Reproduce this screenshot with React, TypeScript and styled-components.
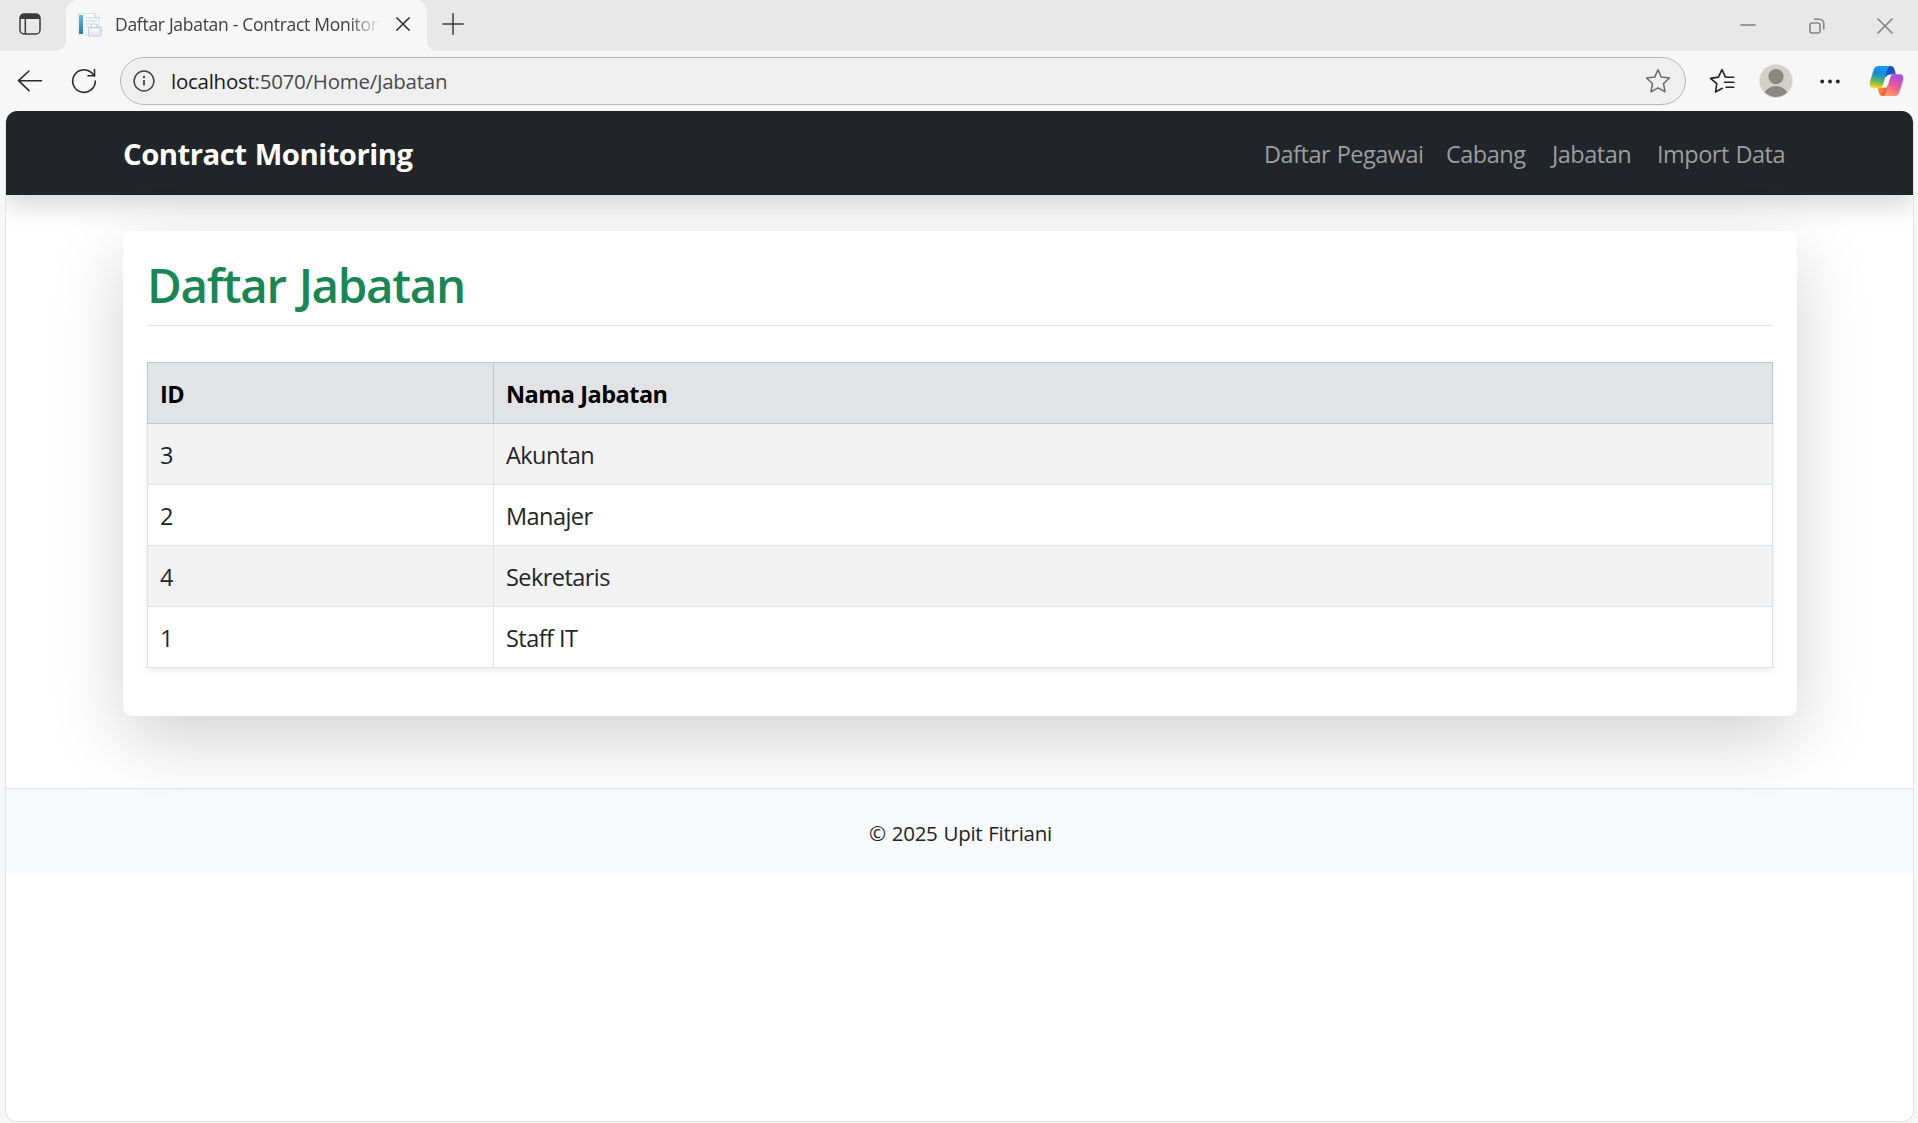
import React from 'react';
import styled, { createGlobalStyle } from 'styled-components';

const GlobalStyle = createGlobalStyle`
  *, *::before, *::after { box-sizing: border-box; }
  body {
    margin: 0;
    background: #f7f7f7;
    color: #212529;
    font-family: 'Segoe UI', 'Open Sans', 'Noto Sans', sans-serif;
    font-size: 23.5px;
    line-height: 36px;
    overflow: hidden;
  }
`;

const Window = styled.div`
  display: flex;
  flex-direction: column;
  width: 1918px;
  height: 1123px;
  background: #f7f7f7;
`;

const TabStrip = styled.div`
  display: flex;
  flex: none;
  height: 51px;
  background: #e8e8e8;
`;

const StripCell = styled.div<{ $w: number; $round?: string; $lift?: number }>`
  display: flex;
  align-items: center;
  justify-content: center;
  width: ${p => p.$w}px;
  height: 51px;
  padding-bottom: ${p => p.$lift ?? 0}px;
  background: #e8e8e8;
  border-radius: ${p => p.$round ?? '0'};
`;

const TabShell = styled.div`
  display: flex;
  flex: 1;
  background: #f7f7f7;
`;

const TabCorners = styled.div`
  width: 361px;
  background: #e8e8e8;
`;

const Tab = styled.div`
  display: flex;
  align-items: center;
  height: 51px;
  padding: 0 17px 3px 11px;
  background: #f7f7f7;
  border-radius: 12px 12px 0 0;
`;

const TabTitle = styled.div`
  flex: 1;
  margin-left: 13px;
  margin-right: 10px;
  padding-bottom: 1px;
  white-space: nowrap;
  font-size: 17.5px;
  letter-spacing: -0.29px;
  line-height: 28px;
  color: #404040;
  mask-image: linear-gradient(to right, #000 86%, transparent 98%);
`;

const StripRest = styled.div`
  display: flex;
  flex: 1;
  justify-content: space-between;
  background: #e8e8e8;
  border-bottom-left-radius: 10px;
`;

const WindowControls = styled.div`
  display: flex;
`;

const Toolbar = styled.div`
  display: flex;
  flex: none;
  align-items: center;
  height: 60px;
  padding: 0 12px 1px 14px;
`;

const ToolIcon = styled.div<{ $w: number; $ml?: number }>`
  display: flex;
  flex: none;
  align-items: center;
  justify-content: center;
  width: ${p => p.$w}px;
  margin-left: ${p => p.$ml ?? 0}px;
`;

const AddressBar = styled.div`
  display: flex;
  align-items: center;
  width: 1566px;
  height: 48px;
  margin-left: 21px;
  padding: 0 14px 0 12px;
  background: #efefef;
  border: 1px solid #b8b8b8;
  border-radius: 24px;
`;

const Address = styled.div`
  flex: 1;
  margin-left: 16px;
  font-size: 20.5px;
  letter-spacing: -0.26px;
  line-height: 30px;
  color: #4a4a4a;
`;

const Host = styled.span`
  color: #1b1b1b;
`;

const Page = styled.div`
  flex: none;
  width: 1909px;
  height: 1011px;
  margin-left: 5px;
  background: #fff;
  border: 1px solid #e2e2e2;
  border-top: 0;
  border-radius: 12px;
  overflow: hidden;
`;

const Navbar = styled.header`
  display: flex;
  align-items: center;
  justify-content: space-between;
  height: 84px;
  padding: 2px 128px 0 117px;
  background: #212529;
  box-shadow: 0 12px 24px rgba(0, 0, 0, 0.15);
`;

const Brand = styled.div`
  font-size: 29.3px;
  font-weight: 700;
  letter-spacing: -0.5px;
  word-spacing: 1px;
  color: #fff;
`;

const Nav = styled.nav`
  display: flex;
  gap: 24px;
`;

const NavLink = styled.a<{ $w: number }>`
  width: ${p => p.$w}px;
  white-space: nowrap;
  letter-spacing: -0.5px;
  word-spacing: 1px;
  color: #9b9d9e;
`;

const Card = styled.main`
  height: 485px;
  margin: 36px 116px 0 117px;
  padding: 24px;
  background: #fff;
  border-radius: 9px;
  box-shadow: 0 24px 72px rgba(0, 0, 0, 0.175);
`;

const Title = styled.h2`
  height: 71px;
  margin: 0 0 36px;
  padding-top: 1px;
  border-bottom: 1px solid #dee2e6;
  font-size: 47.5px;
  font-weight: 600;
  letter-spacing: -1.3px;
  word-spacing: 2px;
  line-height: 58px;
  color: #198754;
`;

const Table = styled.table`
  width: 1626px;
  table-layout: fixed;
  border-collapse: collapse;
  box-shadow: 0 3px 6px rgba(0, 0, 0, 0.075);
`;

const Th = styled.th<{ $w?: number }>`
  width: ${p => (p.$w ? `${p.$w}px` : 'auto')};
  height: 61px;
  padding: 1px 12px 0;
  text-align: left;
  font-weight: 700;
  letter-spacing: -0.5px;
  color: #000;
  background: #e2e3e5;
  border: 1px solid #c6c7c8;
`;

const Td = styled.td`
  height: 61px;
  padding: 1px 12px 0;
  border: 1px solid #dee2e6;
  letter-spacing: -0.55px;
`;

const Row = styled.tr`
  &:nth-child(odd) { background: #f2f2f2; }
`;

const Footer = styled.footer`
  display: flex;
  align-items: center;
  justify-content: center;
  height: 85px;
  margin-top: 72px;
  padding: 4px 0 0 2px;
  background: rgba(240, 244, 248, 0.55);
  border-top: 1px solid #dee2e6;
  font-size: 20.5px;
  letter-spacing: -0.26px;
  word-spacing: 0.8px;
`;

const rows = [
  { id: 3, name: 'Akuntan' },
  { id: 2, name: 'Manajer' },
  { id: 4, name: 'Sekretaris' },
  { id: 1, name: 'Staff IT' },
];

const links = [
  { label: 'Daftar Pegawai', width: 158 },
  { label: 'Cabang', width: 82 },
  { label: 'Jabatan', width: 81 },
  { label: 'Import Data', width: 128 },
];

const TabActionsIcon = () => (
  <svg width="22" height="22" viewBox="0 0 22 22" fill="none">
    <rect x="1" y="1" width="20" height="20" rx="4" stroke="#3b3b3b" strokeWidth="1.5" />
    <path d="M1 6V4.5A3.8 3.8 0 0 1 4.8 1h12.4A3.8 3.8 0 0 1 21 4.5V6Z" fill="#3b3b3b" />
    <path d="M6.3 6v15" stroke="#3b3b3b" strokeWidth="1.5" />
  </svg>
);

const FaviconSvg = styled.svg`
  flex: none;
`;

const Favicon = () => (
  <FaviconSvg width="25" height="25" viewBox="0 0 25 25">
    <defs>
      <linearGradient id="spine" x2="0" y2="1">
        <stop stopColor="#67b7e0" />
        <stop offset="1" stopColor="#2d78b5" />
      </linearGradient>
    </defs>
    <path d="M1 1.5h17l4 4V23H1Z" fill="#fafbfc" stroke="#d5dbe1" strokeWidth=".8" />
    <path d="M18 1v5h5" fill="#e8edf1" stroke="#c4ccd4" strokeWidth=".8" />
    <rect x="2" y="3" width="4" height="19" fill="url(#spine)" />
    <path d="M9 6h8M9 9h11M9 12h4M9 15h3" stroke="#d5dee7" strokeWidth="1.4" />
    <path d="M14 12h6v3h4v6H14Z" fill="#f5f8fc" stroke="#b1c0d1" strokeWidth=".8" />
    <rect x="11.5" y="15.500" width="12.500" height="8.500" rx=".8" fill="#e7eef7" stroke="#b3c3d8" strokeWidth=".8" />
    <path d="M13.500 18.500h8" stroke="#fff" strokeWidth="1.600" />
  </FaviconSvg>
);

const CrossIcon = ({ size, color }: { size: number; color: string }) => (
  <FaviconSvg width={size} height={size} viewBox="0 0 16 16" fill="none">
    <path d="M1 1l14 14M15 1L1 15" stroke={color} strokeWidth="1.7" strokeLinecap="round" />
  </FaviconSvg>
);

const PlusIcon = () => (
  <svg width="22" height="22" viewBox="0 0 22 22">
    <path d="M11 .8v20.400M.8 11h20.400" stroke="#3b3b3b" strokeWidth="1.5" strokeLinecap="round" />
  </svg>
);

const MinimizeIcon = () => (
  <svg width="16" height="16" viewBox="0 0 16 16">
    <path d="M.5 8h15" stroke="#858585" strokeWidth="1.6" />
  </svg>
);

const RestoreIcon = () => (
  <svg width="16" height="16" viewBox="0 0 16 16" fill="none" stroke="#858585" strokeWidth="1.6">
    <rect x="1" y="5" width="10" height="10" rx="2" />
    <path d="M5.500 1.200h4.800A4.500 4.500 0 0 1 14.800 5.700V11" strokeLinecap="round" />
  </svg>
);

const BackIcon = () => (
  <svg width="26" height="24" viewBox="0 0 26 24" fill="none" stroke="#2b2b2b" strokeWidth="1.6" strokeLinecap="round" strokeLinejoin="round">
    <path d="M12 2L1.500 11.700l10.500 10M1.500 11.700h23" />
  </svg>
);

const ReloadIcon = () => (
  <svg width="26" height="26" viewBox="0 0 26 26" fill="none" stroke="#2b2b2b" strokeWidth="1.6" strokeLinecap="round" strokeLinejoin="round">
    <path d="M24.300 13A11.300 11.300 0 1 1 20.500 4.600L23.500 7.700" />
    <path d="M23.500 1.500V7.800H17" />
  </svg>
);

const InfoIcon = () => (
  <FaviconSvg width="22" height="22" viewBox="0 0 22 22" fill="none" stroke="#444" strokeWidth="1.5">
    <circle cx="11" cy="11" r="9.900" />
    <path d="M11 10v5.500" strokeWidth="1.800" />
    <circle cx="11" cy="7" r="1.200" fill="#444" stroke="none" />
  </FaviconSvg>
);

const StarIcon = () => (
  <svg width="26" height="26" viewBox="0 0 26 26" fill="none" stroke="#6b6b6b" strokeWidth="1.500" strokeLinejoin="round">
    <path d="M13 1.800l3.300 7.300 8.200.9-6 5.500 1.500 8.300L13 19.800l-7 4 1.500-8.300-6-5.500 8.200-.9Z" />
  </svg>
);

const FavoritesIcon = () => (
  <svg width="26" height="26" viewBox="0 0 26 26" fill="none" stroke="#262626" strokeWidth="1.600" strokeLinecap="round" strokeLinejoin="round">
    <path d="M12.800 20l-6.500 3.700 1.500-8.100-6.300-5.400 7.900-1.200L13 1.600l3.200 7v5M16.200 8.600l.8 5.400" stroke="none" />
    <path d="M13.300 20.300L6.500 24l1.300-8.300-6.300-5.300 7.900-1.300L13 1.600l3.300 7.200 1 .3M17 9.200h7.800M15.500 14.300h9.300M17 19.300h7.800" />
  </svg>
);

const Avatar = () => (
  <svg width="34" height="34" viewBox="0 0 34 34">
    <defs>
      <clipPath id="avatarClip"><circle cx="17" cy="17" r="16" /></clipPath>
    </defs>
    <circle cx="17" cy="17" r="16.600" fill="#d3d0cc" stroke="#e5e3e1" strokeWidth=".8" />
    <g fill="#8b8783" clipPath="url(#avatarClip)">
      <circle cx="17" cy="12.600" r="7.600" />
      <path d="M4 34c1-7.500 6-12 13-12s12 4.500 13 12Z" />
    </g>
  </svg>
);

const DotsIcon = () => (
  <svg width="20" height="6" viewBox="0 0 20 6" fill="#262626">
    <circle cx="2.200" cy="3.500" r="1.900" /><circle cx="10" cy="3.500" r="1.900" /><circle cx="17.800" cy="3.500" r="1.900" />
  </svg>
);

const CopilotIcon = () => (
  <svg width="35" height="32" viewBox="0 0 35 32">
    <defs>
      <linearGradient id="cpLeft" x1=".55" y1="0" x2=".35" y2="1">
        <stop stopColor="#159ee8" />
        <stop offset=".35" stopColor="#1689dc" />
        <stop offset=".68" stopColor="#55b56b" />
        <stop offset="1" stopColor="#f3cf16" />
      </linearGradient>
      <linearGradient id="cpRight" x1=".7" y1="0" x2=".3" y2="1">
        <stop stopColor="#a34fe8" />
        <stop offset=".45" stopColor="#e6549e" />
        <stop offset="1" stopColor="#ff9f61" />
      </linearGradient>
      <linearGradient id="cpTop" x2="1" y2="1">
        <stop stopColor="#1636a6" />
        <stop offset="1" stopColor="#1f68df" />
      </linearGradient>
      <linearGradient id="cpBottom" x2="1" y2=".4">
        <stop stopColor="#ffb13b" />
        <stop offset="1" stopColor="#e8403c" />
      </linearGradient>
    </defs>
    <path d="M17 1h4.500c2.500 0 3.500 1.500 4.200 4l1.200 4.500H21c-2 0-3 1-3.600 3L13 9Z" fill="url(#cpTop)" />
    <path d="M18 31h-4.200c-2.500 0-3.500-1.500-4.200-4L8.500 22.500H14c2 0 3-1 3.600-3L22 23Z" fill="url(#cpBottom)" />
    <path d="M9.500 1H22c-2.300.3-3 2-3.700 4.300l-4 13.500c-.9 2.700-2 3.900-4.500 3.900H4.500C1 22.700.2 20 1 16.500L4.600 5C5.400 2.300 7 1 9.500 1Z" fill="url(#cpLeft)" />
    <path d="M25.500 31H13.300c2.300-.3 3-2 3.700-4.300l4-13.500c.9-2.700 2-3.900 4.500-3.900h5c3.500 0 4.300 2.700 3.500 6.200L30.400 27c-.8 2.700-2.400 4-4.900 4Z" fill="url(#cpRight)" />
    <path d="M18.600 10.500h3.200c-.6.800-.9 1.700-1.200 2.800l-2.700 9.200h-4.200c.6-.8 1-2 1.300-3l2.200-7.300c.3-.8.600-1.300 1.400-1.700Z" fill="#f7f7f7" />
  </svg>
);

export default function App() {
  return (
    <>
      <GlobalStyle />
      <Window>
        <TabStrip>
          <TabShell>
            <StripCell $w={66} $round="0 0 10px 0" $lift={3}>
              <ToolIcon $w={22} $ml={-6}><TabActionsIcon /></ToolIcon>
            </StripCell>
            <TabCorners>
              <Tab>
                <Favicon />
                <TabTitle>Daftar Jabatan - Contract Monitor</TabTitle>
                <CrossIcon size={14} color="#3b3b3b" />
              </Tab>
            </TabCorners>
            <StripRest>
              <StripCell $w={51} $round="0 0 0 10px" $lift={4}><PlusIcon /></StripCell>
              <WindowControls>
                <StripCell $w={69} $lift={1}><MinimizeIcon /></StripCell>
                <StripCell $w={69}><RestoreIcon /></StripCell>
                <StripCell $w={67}><CrossIcon size={16} color="#858585" /></StripCell>
              </WindowControls>
            </StripRest>
          </TabShell>
        </TabStrip>
        <Toolbar>
          <ToolIcon $w={32}><BackIcon /></ToolIcon>
          <ToolIcon $w={30} $ml={23}><ReloadIcon /></ToolIcon>
          <AddressBar>
            <InfoIcon />
            <Address><Host>localhost</Host>:5070/Home/Jabatan</Address>
            <StarIcon />
          </AddressBar>
          <ToolIcon $w={26} $ml={23}><FavoritesIcon /></ToolIcon>
          <ToolIcon $w={34} $ml={24}><Avatar /></ToolIcon>
          <ToolIcon $w={20} $ml={27}><DotsIcon /></ToolIcon>
          <ToolIcon $w={35} $ml={29}><CopilotIcon /></ToolIcon>
        </Toolbar>
        <Page>
          <Navbar>
            <Brand>Contract Monitoring</Brand>
            <Nav>
              {links.map(link => (
                <NavLink key={link.label} $w={link.width}>{link.label}</NavLink>
              ))}
            </Nav>
          </Navbar>
          <Card>
            <Title>Daftar Jabatan</Title>
            <Table>
              <thead>
                <tr>
                  <Th $w={346}>ID</Th>
                  <Th>Nama Jabatan</Th>
                </tr>
              </thead>
              <tbody>
                {rows.map(row => (
                  <Row key={row.id}>
                    <Td>{row.id}</Td>
                    <Td>{row.name}</Td>
                  </Row>
                ))}
              </tbody>
            </Table>
          </Card>
          <Footer>© 2025 Upit Fitriani</Footer>
        </Page>
      </Window>
    </>
  );
}
